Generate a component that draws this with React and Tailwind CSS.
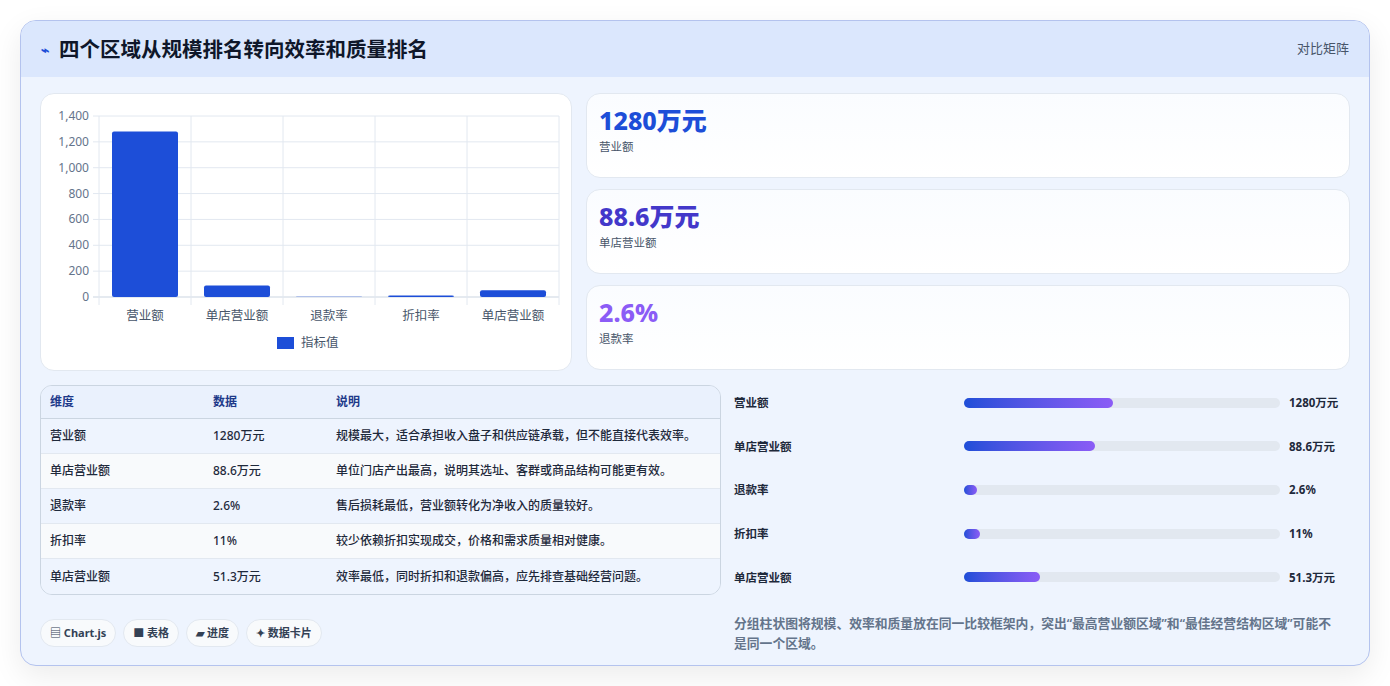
import React from "react";

const F = { fontFamily: '"Noto Sans", "Noto Sans CJK SC", sans-serif' };

function Chart() {
  const x0 = 58, x1 = 518, yTop = 22, yBot = 203;
  const cats = ["营业额", "单店营业额", "退款率", "折扣率", "单店营业额"];
  const vals = [1280, 88.6, 2.6, 11, 51.3];
  const cw = (x1 - x0) / 5;
  const ys = (v) => yBot - (v / 1400) * (yBot - yTop);
  return (
    <svg width="531" height="277" className="block">
      {[0, 200, 400, 600, 800, 1000, 1200, 1400].map((v) => (
        <g key={v}>
          <line x1={x0 - 6} x2={x1} y1={ys(v)} y2={ys(v)} stroke={v === 0 ? "#cbd5e1" : "#e2e8f0"} />
          <text x={x0 - 10} y={ys(v) + 4} textAnchor="end" fontSize="12" fill="#64748b" style={F}>
            {v.toLocaleString("en-US")}
          </text>
        </g>
      ))}
      {[0, 1, 2, 3, 4, 5].map((i) => (
        <line key={i} x1={x0 + i * cw} x2={x0 + i * cw} y1={yTop} y2={yBot + 8} stroke="#e2e8f0" />
      ))}
      {vals.map((v, i) => (
        <rect key={i} x={x0 + i * cw + 13} width={cw - 26} y={ys(v)} height={yBot - ys(v)} rx="2" fill="#1d4ed8" />
      ))}
      {cats.map((c, i) => (
        <text key={i} x={x0 + i * cw + cw / 2} y={226} textAnchor="middle" fontSize="12.5" fill="#475569" style={F}>{c}</text>
      ))}
      <rect x="236" y="243" width="17" height="12" fill="#1d4ed8" />
      <text x="260" y="253" fontSize="12.5" fill="#475569" style={F}>指标值</text>
    </svg>
  );
}

const stats = [
  ["1280万元", "营业额", "text-[#1d4ed8]"],
  ["88.6万元", "单店营业额", "text-[#4338ca]"],
  ["2.6%", "退款率", "text-[#8b5cf6]"],
];
const rows = [
  ["营业额", "1280万元", "规模最大，适合承担收入盘子和供应链承载，但不能直接代表效率。"],
  ["单店营业额", "88.6万元", "单位门店产出最高，说明其选址、客群或商品结构可能更有效。"],
  ["退款率", "2.6%", "售后损耗最低，营业额转化为净收入的质量较好。"],
  ["折扣率", "11%", "较少依赖折扣实现成交，价格和需求质量相对健康。"],
  ["单店营业额", "51.3万元", "效率最低，同时折扣和退款偏高，应先排查基础经营问题。"],
];
const bars = [
  ["营业额", "1280万元", 47],
  ["单店营业额", "88.6万元", 41.5],
  ["退款率", "2.6%", 4],
  ["折扣率", "11%", 5],
  ["单店营业额", "51.3万元", 24],
];

export default function App() {
  return (
    <div className="w-[1390px] h-[686px] bg-white pt-[20px] pl-[20px]" style={F}>
      <div className="w-[1350px] h-[646px] rounded-[16px] border border-[#b4c3ee] bg-[#eef4fe] overflow-hidden shadow-[0_10px_30px_rgba(0,0,0,0.08)]">
        <div className="h-[56px] bg-[#dbe7fd] flex items-center justify-between px-[20px]">
          <div className="flex items-center gap-[10px]">
            <span className="text-[#1d4ed8] text-[14px] font-bold">⌁</span>
            <span className="text-[20.5px] font-bold text-[#0f172a]">四个区域从规模排名转向效率和质量排名</span>
          </div>
          <span className="text-[13px] text-[#475569]">对比矩阵</span>
        </div>
        <div className="px-[19px] pt-[16px]">
          <div className="flex gap-[14px]">
            <div className="w-[532px] h-[278px] bg-white rounded-[14px] border border-[#e2e8f0]">
              <Chart />
            </div>
            <div className="flex-1 flex flex-col gap-[11px]">
              {stats.map(([v, l, c]) => (
                <div key={l} className="h-[85px] rounded-[14px] border border-[#e2e8f0] bg-gradient-to-b from-[#fafcff] to-white px-[12px] pt-[9px]">
                  <div className={`text-[25px] font-extrabold leading-[34px] ${c}`}>{v}</div>
                  <div className="text-[11.5px] text-[#475569] mt-[1px]">{l}</div>
                </div>
              ))}
            </div>
          </div>
          <div className="flex gap-[13px] mt-[14px]">
            <div className="w-[681px]">
              <div className="rounded-[12px] border border-[#cbd5e1] overflow-hidden text-[12px] font-medium text-[#1e293b]">
                <div className="flex h-[33px] items-center bg-[#eaf1fd] font-bold text-[#1e3a8a] border-b border-[#cbd5e1]">
                  <div className="w-[172px] pl-[9px]">维度</div>
                  <div className="w-[123px]">数据</div>
                  <div>说明</div>
                </div>
                {rows.map((r, i) => (
                  <div key={i} className={`flex h-[35px] items-center ${i % 2 === 0 ? "bg-[#eef4fe]" : "bg-[#f8fafc]"} ${i < 4 ? "border-b border-[#e2e8f0]" : ""}`}>
                    <div className="w-[172px] pl-[9px]">{r[0]}</div>
                    <div className="w-[123px]">{r[1]}</div>
                    <div>{r[2]}</div>
                  </div>
                ))}
              </div>
              <div className="flex gap-[7px] mt-[24px] text-[11px] font-bold text-[#334155]">
                {["▤ Chart.js", "■ 表格", "▰ 进度", "✦ 数据卡片"].map((t) => (
                  <span key={t} className="h-[28px] px-[9px] rounded-full bg-[#f8fafc] border border-[#e2e8f0] flex items-center">{t}</span>
                ))}
              </div>
            </div>
            <div className="flex-1 pr-[10px]">
              {bars.map(([l, v, p]) => (
                <div key={l + v} className="flex items-center h-[43.6px] pb-[8px] text-[11.5px] font-semibold text-[#1e293b]">
                  <div className="w-[230px]">{l}</div>
                  <div className="w-[316px] h-[10px] rounded-full bg-[#e2e8f0]">
                    <div className="h-[10px] rounded-full bg-gradient-to-r from-[#1d4ed8] to-[#8b5cf6]" style={{ width: `${p}%` }} />
                  </div>
                  <div className="ml-[9px] font-bold">{v}</div>
                </div>
              ))}
              <p className="mt-[10px] text-[12.8px] leading-[20px] text-[#64748b] font-semibold">
                分组柱状图将规模、效率和质量放在同一比较框架内，突出“最高营业额区域”和“最佳经营结构区域”可能不是同一个区域。
              </p>
            </div>
          </div>
        </div>
      </div>
    </div>
  );
}
